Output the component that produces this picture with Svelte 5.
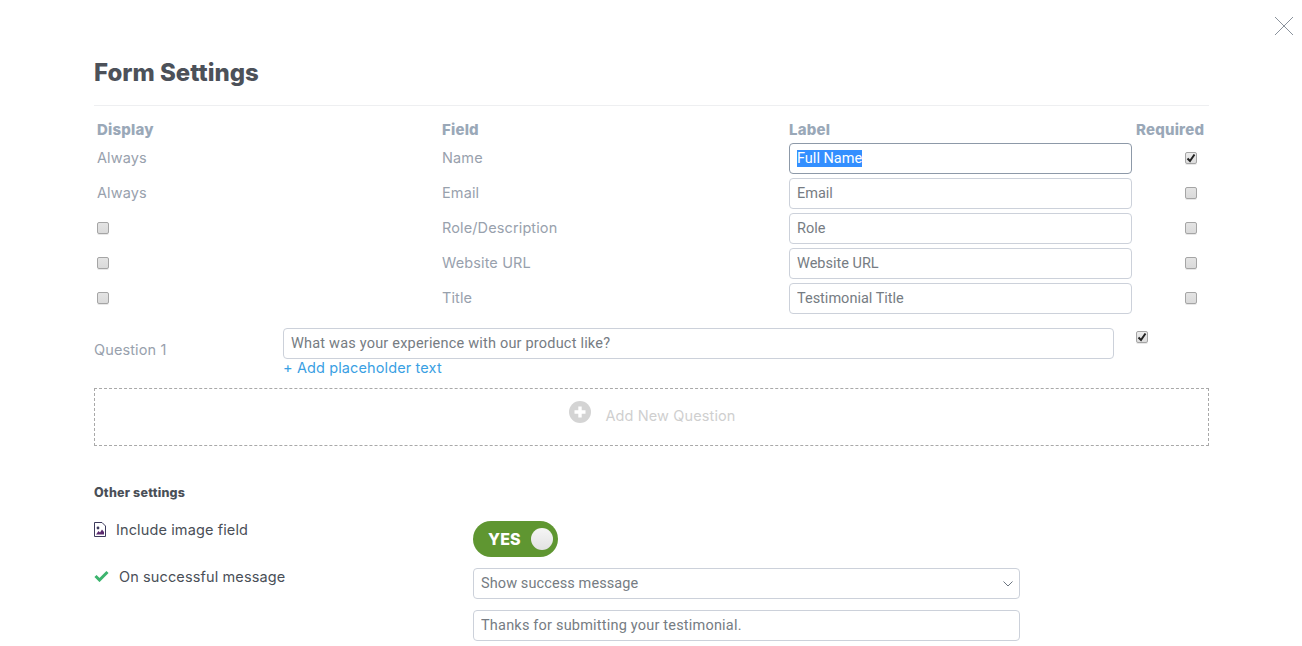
<script>
    import { onMount } from "svelte";

    const rows = [
        { display: "Always", field: "Name", label: "Full Name", required: true },
        { display: "Always", field: "Email", label: "Email" },
        { field: "Role/Description", label: "Role" },
        { field: "Website URL", label: "Website URL" },
        { field: "Title", label: "Testimonial Title" }
    ];

    let firstInput;

    onMount(() => {
        firstInput.focus();
        firstInput.select();
    });
</script>

<div class="page">
    <button class="close" aria-label="Close">
        <svg width="20" height="20" viewBox="0 0 20 20"><path d="M1 1 L19 19 M19 1 L1 19" stroke="#8a929c" stroke-width="1" fill="none" /></svg>
    </button>

    <h1>Form Settings</h1>

    <div class="fields">
        <div class="head">Display</div>
        <div class="head">Field</div>
        <div class="head">Label</div>
        <div class="head">Required</div>

        {#each rows as row, i}
            <div class="muted cell">
                {#if row.display}{row.display}{:else}<input type="checkbox" class="box" />{/if}
            </div>
            <div class="muted cell">{row.field}</div>
            <div>
                {#if i === 0}
                    <input class="text first" bind:this={firstInput} value={row.label} />
                {:else}
                    <input class="text" value={row.label} />
                {/if}
            </div>
            <div class="req cell"><input type="checkbox" class="box" checked={row.required} /></div>
        {/each}
    </div>

    <div class="question">
        <div class="q-label muted">Question 1</div>
        <div class="q-main">
            <input class="text wide" value="What was your experience with our product like?" />
            <a href="#placeholder" class="add-link">+ Add placeholder text</a>
        </div>
        <input type="checkbox" class="box q-check" checked />
    </div>

    <div class="add-question">
        <svg class="plus" width="22" height="22" viewBox="0 0 22 22">
            <circle cx="11" cy="11" r="11" fill="#d4d4d4" />
            <path d="M11 5.5 V16.5 M5.5 11 H16.5" stroke="#fff" stroke-width="3.4" />
        </svg>
        <span>Add New Question</span>
    </div>

    <h2>Other settings</h2>

    <div class="settings">
        <div class="s-label">
            <svg class="file-icon" width="12" height="15" viewBox="0 0 12 15">
                <path d="M.5.5 H8 L11.5 4 V14.5 H.5 Z" fill="#fff" stroke="#3d3a5c" />
                <circle cx="4" cy="6" r="1.4" fill="#3d3a5c" />
                <path d="M2 12.5 L4.5 9 L6 10.5 L8 7.5 L10 10 V12.5 Z" fill="#5b2a6e" />
            </svg>
            Include image field
        </div>
        <div class="toggle">
            <span>YES</span>
            <i></i>
        </div>

        <div class="s-label success">
            <svg width="15" height="12" viewBox="0 0 15 12">
                <path d="M1.5 6 L5.5 10 L13.5 2" fill="none" stroke="#3cb46e" stroke-width="3" />
            </svg>
            On successful message
        </div>
        <div class="stack">
            <div class="select">
                <span>Show success message</span>
                <svg width="10" height="6" viewBox="0 0 10 6"><path d="M.5.5 L5 5 L9.5.5" fill="none" stroke="#6b7580" /></svg>
            </div>
            <input class="text wide" value="Thanks for submitting your testimonial." />
        </div>
    </div>
</div>

<style>
    :global(body) {
        margin: 0;
        background: #fff;
    }

    .page {
        position: relative;
        box-sizing: border-box;
        width: 1302px;
        height: 646px;
        overflow: hidden;
        padding: 0 93px 0 94px;
        font-family: "Inter", "Liberation Sans", sans-serif;
        font-size: 14.5px;
        letter-spacing: 0.12px;
        color: #4a4f57;
    }

    .close {
        position: absolute;
        top: 16px;
        right: 8px;
        padding: 0;
        border: 0;
        background: none;
        line-height: 0;
    }

    h1 {
        margin: 0;
        padding-top: 59px;
        padding-bottom: 18px;
        height: 28px;
        line-height: 28px;
        font-size: 24px;
        font-weight: 800;
        letter-spacing: 0;
        color: #4c5159;
        border-bottom: 1px solid #eeeff1;
    }

    .fields {
        display: grid;
        grid-template-columns: 345px 347px 347px auto;
        grid-template-rows: 21px repeat(5, 31px);
        row-gap: 4px;
        padding-left: 3px;
        margin-top: 12px;
        align-items: center;
    }

    .head {
        align-self: end;
        font-size: 15px;
        font-weight: 800;
        letter-spacing: 0.2px;
        color: #9aa8b8;
        line-height: 19px;
    }

    .muted {
        color: #98a1ad;
    }

    .cell {
        margin-top: -2px;
    }

    .text {
        display: block;
        box-sizing: border-box;
        width: 100%;
        height: 31px;
        padding: 0 7px;
        border: 1px solid #ccd1da;
        border-radius: 4px;
        background: #fff;
        font-family: "Roboto", "Liberation Sans", sans-serif;
        font-size: 14.5px;
        letter-spacing: 0;
        color: #767c83;
        outline: none;
    }

    .text.wide {
        letter-spacing: 0.2px;
    }

    .fields > div:nth-child(4n + 3) .text {
        width: 343px;
    }

    .text.first {
        border-color: #8d99a8;
    }

    .text::selection {
        background: #338fff;
        color: #fff;
    }

    .box {
        appearance: none;
        display: block;
        box-sizing: border-box;
        width: 12px;
        height: 12px;
        margin: 0;
        border: 1px solid #a5a5a5;
        border-radius: 2px;
        background: linear-gradient(#e4e4e4, #dadada);
        box-shadow: 0 1px 0 #e8e8e8;
    }

    .box:checked {
        background: center / 10px 10px no-repeat url("data:image/svg+xml,%3Csvg xmlns='http://www.w3.org/2000/svg' viewBox='0 0 10 10'%3E%3Cpath d='M1.5 5.5 L4 8 L8.5 1.5' fill='none' stroke='%23222' stroke-width='2'/%3E%3C/svg%3E"), linear-gradient(#ececec, #dcdcdc);
    }

    .req {
        padding-left: 49px;
    }

    .question {
        display: flex;
        align-items: flex-start;
        margin-top: 14px;
        height: 60px;
    }

    .q-label {
        width: 189px;
        padding-top: 13px;
    }

    .q-main {
        width: 831px;
    }

    .add-link {
        display: block;
        line-height: 18px;
        color: #3a9fe3;
        text-decoration: none;
    }

    .q-check {
        margin-left: 22px;
        margin-top: 3px;
    }

    .add-question {
        box-sizing: border-box;
        display: flex;
        justify-content: center;
        align-items: center;
        gap: 14px;
        height: 58px;
        padding-left: 2px;
        border: 1px dashed #a9a9a9;
        color: #cfcfcf;
    }

    .add-question span {
        margin-top: -4px;
    }

    .plus {
        margin-top: -10px;
    }

    h2 {
        margin: 39px 0 0;
        height: 16px;
        line-height: 16px;
        font-size: 12.5px;
        font-weight: 800;
        letter-spacing: 0.2px;
        color: #4a4f57;
    }

    .settings {
        display: grid;
        grid-template-columns: 379px 547px;
        margin-top: 20px;
    }

    .s-label {
        display: flex;
        align-items: center;
        gap: 10px;
        height: 18px;
        margin-top: -1px;
    }

    .success {
        margin-top: 10px;
    }

    .toggle {
        box-sizing: border-box;
        display: flex;
        align-items: center;
        justify-content: space-between;
        width: 85px;
        height: 36px;
        padding: 0 5px 0 15px;
        border-radius: 18px;
        background: #5f9631;
        color: #fff;
        font-weight: 800;
        font-size: 16px;
    }

    .toggle i {
        display: block;
        width: 22px;
        height: 22px;
        border-radius: 50%;
        background: linear-gradient(#f5f5f5, #e2e2e2);
    }

    .stack {
        display: flex;
        flex-direction: column;
        gap: 11px;
        padding-top: 11px;
    }

    .select {
        box-sizing: border-box;
        display: flex;
        align-items: center;
        justify-content: space-between;
        height: 31px;
        padding: 0 6px 0 7px;
        border: 1px solid #ccd1da;
        border-radius: 4px;
        font-family: "Roboto", "Liberation Sans", sans-serif;
        letter-spacing: 0.1px;
        color: #767c83;
    }
</style>
